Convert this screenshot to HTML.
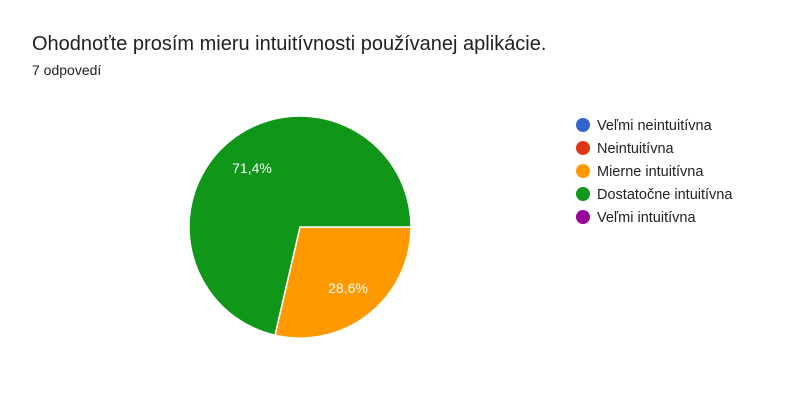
<!DOCTYPE html>
<html><head><meta charset="utf-8"><style>
body{margin:0;width:804px;height:417px;background:#fff;overflow:hidden;font-family:"Liberation Sans",Roboto,sans-serif;position:relative}
.t{position:absolute;left:32px;top:33px;font-size:20px;color:#202124}
.s{position:absolute;left:32px;top:62px;font-size:14px;color:#202124}
.l{position:absolute;left:576px;font-size:14.5px;color:#222;line-height:16px}
.l i{position:absolute;left:0;top:1px;width:14px;height:14px;border-radius:50%}
.l span{position:absolute;left:21px;top:1px;white-space:nowrap}
</style></head><body>
<div class="t">Ohodnoťte prosím mieru intuitívnosti používanej aplikácie.</div>
<div class="s">7 odpovedí</div>
<svg width="804" height="417" style="position:absolute;left:0;top:0">
<path d="M300 227 L411 227 A111 111 0 0 1 275 335.2 Z" fill="#ff9900" stroke="#fff" stroke-width="1.5"/>
<path d="M300 227 L275 335.2 A111 111 0 1 1 411 227 Z" fill="#109618" stroke="#fff" stroke-width="1.5"/>
<text x="252" y="173" fill="#fff" font-size="14" text-anchor="middle" font-family="Liberation Sans,sans-serif">71,4%</text>
<text x="348" y="293" fill="#fff" font-size="14" text-anchor="middle" font-family="Liberation Sans,sans-serif">28,6%</text>
</svg>
<div class="l" style="top:117px"><i style="background:#3366cc"></i><span>Veľmi neintuitívna</span></div>
<div class="l" style="top:140px"><i style="background:#dc3912"></i><span>Neintuitívna</span></div>
<div class="l" style="top:163px"><i style="background:#ff9900"></i><span>Mierne intuitívna</span></div>
<div class="l" style="top:186px"><i style="background:#109618"></i><span>Dostatočne intuitívna</span></div>
<div class="l" style="top:209px"><i style="background:#990099"></i><span>Veľmi intuitívna</span></div>
</body></html>
